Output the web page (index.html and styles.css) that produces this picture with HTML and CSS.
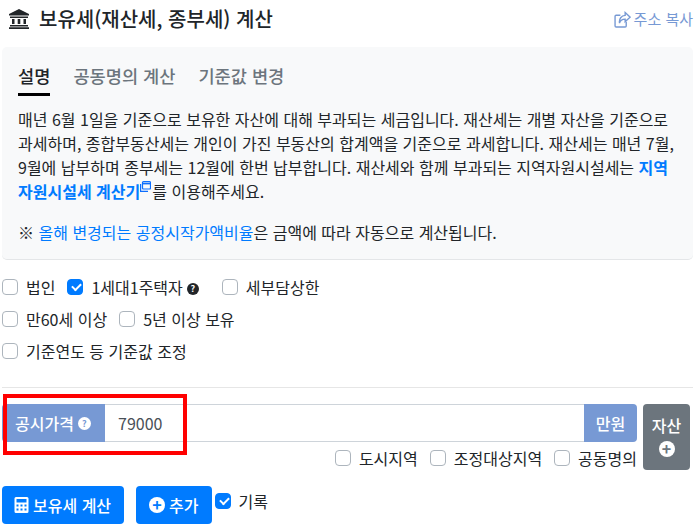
FILE: index.html
```html
<!DOCTYPE html>
<html lang="ko">
<head>
	<meta charset="UTF-8">
	<title>보유세 계산</title>
	<link rel="stylesheet" href="styles.css">
</head>
<body>
	<div class="head">
		<h1 class="title">
			<svg class="bank" viewBox="0 0 20 20"><path fill="#212529" d="M10 0 L20 5 V6.5 H0 V5 Z M1 7.5 H19 V9 H1 Z M3 10 H5.5 V15 H3 Z M8.7 10 H11.3 V15 H8.7 Z M14.5 10 H17 V15 H14.5 Z M1 16 H19 V17.5 H1 Z M0 18.3 H20 V20 H0 Z"/></svg>
			보유세(재산세, 종부세) 계산
		</h1>
		<a class="copy">
			<svg class="share" viewBox="0 0 16 16" fill="none" stroke="#7799d4" stroke-width="1.3"><path d="M11.5 10 V14 a1 1 0 0 1 -1 1 H2 a1 1 0 0 1 -1 -1 V5 a1 1 0 0 1 1 -1 H6"/><path d="M10.5 1.5 L15.2 5.8 L10.5 10 V7.6 C7.5 7.6 5.8 8.6 5.2 11.5 C4.5 7.5 7 4.3 10.5 4.1 Z"/></svg>
			주소 복사
		</a>
	</div>

	<div class="card">
		<ul class="tabs">
			<li class="act">설명</li>
			<li>공동명의 계산</li>
			<li>기준값 변경</li>
		</ul>
		<p class="desc">매년 6월 1일을 기준으로 보유한 자산에 대해 부과되는 세금입니다. 재산세는 개별 자산을 기준으로 과세하며, 종합부동산세는 개인이 가진 부동산의 합계액을 기준으로 과세합니다. 재산세는 매년 7월, 9월에 납부하며 종부세는 12월에 한번 납부합니다. 재산세와 함께 부과되는 지역자원시설세는 <a class="strong">지역자원시설세 계산기<svg class="popup" viewBox="0 0 11 11" fill="none" stroke="#0d6efd" stroke-width="1.2"><rect x="2.5" y="0.6" width="8" height="7.4" rx="1"/><path d="M2.5 2.6 H10.5" stroke-width="1.6"/><path d="M0.6 3 V10.4 H8"/></svg></a>를 이용해주세요.</p>
		<p class="note">※ <a>올해 변경되는 공정시작가액비율</a>은 금액에 따라 자동으로 계산됩니다.</p>
	</div>

	<div class="checks">
		<div class="row">
			<label class="chk"><span class="box"></span>법인</label>
			<label class="chk"><span class="box on"></span>1세대1주택자 <span class="help">?</span></label>
			<label class="chk gap"><span class="box"></span>세부담상한</label>
		</div>
		<div class="row">
			<label class="chk"><span class="box"></span>만60세 이상</label>
			<label class="chk"><span class="box"></span>5년 이상 보유</label>
		</div>
		<div class="row">
			<label class="chk"><span class="box"></span>기준연도 등 기준값 조정</label>
		</div>
	</div>

	<hr class="line">

	<div class="asset">
		<div class="fields">
			<div class="group">
				<span class="addon first">공시가격<span class="help light">?</span></span>
				<span class="value">79000</span>
				<span class="addon last">만원</span>
			</div>
			<div class="opts">
				<label class="chk"><span class="box"></span>도시지역</label>
				<label class="chk"><span class="box"></span>조정대상지역</label>
				<label class="chk"><span class="box"></span>공동명의</label>
			</div>
		</div>
		<button class="add-asset"><span>자산</span><span class="plus small">+</span></button>
	</div>

	<div class="actions">
		<button class="btn calc-btn">
			<svg class="calc" viewBox="0 0 14 16"><path fill="#fff" fill-rule="evenodd" d="M1.5 0 H12.5 A1.5 1.5 0 0 1 14 1.5 V14.5 A1.5 1.5 0 0 1 12.5 16 H1.5 A1.5 1.5 0 0 1 0 14.5 V1.5 A1.5 1.5 0 0 1 1.5 0 Z M2 2 V5.5 H12 V2 Z M2 7.5 V9.5 H4 V7.5 Z M6 7.5 V9.5 H8 V7.5 Z M10 7.5 V9.5 H12 V7.5 Z M2 11.5 V13.5 H4 V11.5 Z M6 11.5 V13.5 H8 V11.5 Z M10 11.5 V13.5 H12 V11.5 Z"/></svg>
			보유세 계산
		</button>
		<button class="btn add-btn"><span class="plus">+</span>추가</button>
		<label class="chk record"><span class="box on"></span>기록</label>
	</div>

	<div class="mark"></div>
</body>
</html>
```

FILE: styles.css
```css
* {
	box-sizing: border-box;
}
html, body {
	margin: 0;
	padding: 0;
}
body {
	position: relative;
	width: 698px;
	height: 531px;
	overflow: hidden;
	padding: 0 5px 0 2px;
	font-family: "Noto Sans CJK KR", "Noto Sans", sans-serif;
	font-size: 16px;
	line-height: 24px;
	color: #212529;
	background: #fff;
}
a {
	color: #007bff;
}
.head {
	display: flex;
	justify-content: space-between;
	align-items: center;
	height: 47px;
	padding: 0 0 9px 7px;
}
.title {
	display: flex;
	align-items: center;
	gap: 10px;
	margin: 0;
	font-size: 20px;
	font-weight: 500;
}
.bank {
	width: 20px;
	height: 20px;
}
.copy {
	display: flex;
	align-items: center;
	gap: 3px;
	font-size: 15px;
	color: #7799d4;
}
.share {
	width: 17px;
	height: 17px;
}
.card {
	height: 213px;
	padding: 15px 16px 0;
	background: #f8f9fa;
	border-bottom: 1px solid #e4e6e8;
	border-radius: 5px;
}
.tabs {
	display: flex;
	gap: 23px;
	margin: 0 0 10.5px;
	padding: 0;
	list-style: none;
	font-size: 17.6px;
	font-weight: 500;
	color: #6c757d;
}
.tabs li {
	height: 34px;
	line-height: 28px;
}
.tabs .act {
	color: #212529;
	border-bottom: 3px solid #000;
}
.desc, .note {
	margin: 0;
	line-height: 24.33px;
}
.note {
	margin-top: 16px;
}
.strong {
	font-weight: 700;
}
.popup {
	width: 11px;
	height: 11px;
	margin-right: 1px;
	vertical-align: 6px;
}
.checks {
	padding-top: 11px;
}
.row {
	display: flex;
	gap: 12px;
	height: 32px;
	align-items: center;
}
.chk {
	display: flex;
	align-items: center;
	gap: 8px;
}
.chk.gap {
	margin-left: 11px;
}
.box {
	position: relative;
	width: 16px;
	height: 16px;
	background: #fff;
	border: 1px solid #adb5bd;
	border-radius: 4px;
}
.box.on {
	background: #007bff;
	border-color: #007bff;
}
.box.on::after {
	content: "";
	position: absolute;
	left: 4px;
	top: 3px;
	width: 7px;
	height: 4px;
	border-left: 2px solid #fff;
	border-bottom: 2px solid #fff;
	transform: rotate(-45deg);
}
.help {
	display: inline-block;
	width: 12px;
	height: 12px;
	margin-top: 4px;
	margin-left: -4px;
	border-radius: 50%;
	background: #212529;
	color: #fff;
	font-size: 9px;
	font-weight: 700;
	line-height: 12px;
	text-align: center;
}
.help.light {
	width: 13px;
	height: 13px;
	margin: 0;
	background: #fff;
	color: #7799d4;
	line-height: 13px;
}
.line {
	margin: 20px 0 16px;
	border: 0;
	border-top: 1px solid #e6e6e6;
}
.asset {
	display: flex;
	gap: 6px;
}
.fields {
	flex: 0 0 635px;
}
.group {
	display: flex;
	height: 38px;
}
.addon {
	display: flex;
	align-items: center;
	gap: 4px;
	background: #7799d4;
	color: #fff;
	font-weight: 500;
}
.first {
	width: 103px;
	padding-right: 1px;
	justify-content: center;
	border-radius: 4px 0 0 4px;
}
.last {
	width: 53px;
	justify-content: center;
	border-radius: 0 4px 4px 0;
}
.value {
	flex: 1;
	padding-left: 13px;
	line-height: 36px;
	color: #495057;
	border-top: 1px solid #ced4da;
	border-bottom: 1px solid #ced4da;
}
.opts {
	display: flex;
	justify-content: flex-end;
	gap: 12px;
	height: 28px;
	padding-top: 4px;
}
.add-asset {
	display: flex;
	flex-direction: column;
	align-items: center;
	gap: 4px;
	width: 47px;
	height: 66px;
	padding: 9px 0 0;
	border: 0;
	border-radius: 4px;
	background: #6c757d;
	color: #fff;
	font: inherit;
	font-weight: 500;
}
.plus {
	display: inline-block;
	flex: none;
	width: 16px;
	height: 16px;
	border-radius: 50%;
	background: #fff;
	color: #007bff;
	font-size: 16px;
	font-weight: 700;
	line-height: 15px;
	text-align: center;
}
.plus.small {
	color: #6c757d;
}
.actions {
	display: flex;
	align-items: flex-start;
	margin-top: 16px;
}
.btn {
	display: flex;
	align-items: center;
	height: 38px;
	border: 0;
	border-radius: 4px;
	background: #007bff;
	color: #fff;
	font: inherit;
	font-weight: 500;
	margin-right: 12px;
}
.calc-btn {
	gap: 4px;
	padding: 0 13px 0 12px;
}
.add-btn {
	gap: 4px;
	padding: 0 13px;
}
.calc {
	width: 15px;
	height: 16px;
}
.record {
	margin-left: -9px;
	margin-top: 3px;
}
.mark {
	position: absolute;
	left: 3px;
	top: 394px;
	width: 184px;
	height: 61px;
	border: 4px solid #f00;
}
```
